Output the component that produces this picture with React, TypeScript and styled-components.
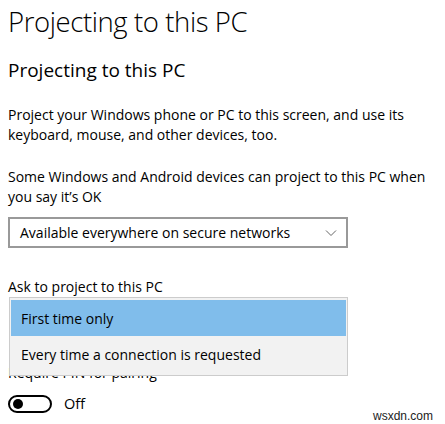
import React from "react";
import styled, { createGlobalStyle } from "styled-components";

const Global = createGlobalStyle`
  html, body { margin: 0; padding: 0; background: #fff; }
  body { font-family: "Open Sans", "Noto Sans", sans-serif; color: #000; }
`;

const Page = styled.div`
  position: relative;
  width: 445px;
  height: 424px;
  overflow: hidden;
  padding-left: 8px;
  box-sizing: border-box;
  display: flex;
  flex-direction: column;
`;

const Title = styled.h1`
  margin: 0;
  font-weight: 300;
  font-size: 27.5px;
  line-height: 43px;
  letter-spacing: -0.4px;
`;

const Subtitle = styled.h2`
  margin: 14px 0 0;
  font-weight: 400;
  font-size: 19px;
  line-height: 27px;
`;

const Para = styled.p<{ $top: number }>`
  margin: ${(p) => p.$top}px 0 0;
  font-size: 14px;
  line-height: 20px;
  width: 440px;
`;

const Combo = styled.div`
  margin-top: 10px;
  width: 340px;
  height: 31px;
  box-sizing: border-box;
  border: 2px solid #999;
  display: flex;
  align-items: center;
  justify-content: space-between;
  padding: 0 9px 0 10px;
  font-size: 14px;
`;

const Chevron = styled.svg`
  width: 12px;
  height: 8px;
`;

const Section = styled.div`
  position: relative;
  margin-top: 29px;
  display: flex;
  flex-direction: column;
`;

const Label = styled.div<{ $top?: number }>`
  margin-top: ${(p) => p.$top ?? 0}px;
  font-size: 14px;
  line-height: 20px;
`;

const Popup = styled.div`
  position: absolute;
  left: 1px;
  top: 20px;
  width: 339px;
  height: 79px;
  box-sizing: border-box;
  background: #f2f2f2;
  border: 1px solid #cccccc;
  padding: 2px 1px;
  display: flex;
  flex-direction: column;
`;

const Item = styled.div<{ $selected?: boolean }>`
  height: 36px;
  display: flex;
  align-items: center;
  padding-left: 10px;
  font-size: 14px;
  background: ${(p) => (p.$selected ? "#80bdeb" : "transparent")};
`;

const ToggleRow = styled.div`
  display: flex;
  align-items: center;
  gap: 12px;
  margin-top: 11px;
  font-size: 14.5px;
`;

const Toggle = styled.div`
  width: 44px;
  height: 18px;
  box-sizing: border-box;
  border: 2px solid #000;
  border-radius: 9px;
  display: flex;
  align-items: center;
  padding-left: 3px;
`;

const Knob = styled.div`
  width: 10px;
  height: 10px;
  border-radius: 50%;
  background: #000;
`;

const Watermark = styled.div`
  position: absolute;
  right: 12px;
  bottom: 1px;
  font-family: "Liberation Sans", Arial, sans-serif;
  font-size: 12px;
  color: #222;
`;

export default function App() {
  return (
    <>
      <Global />
      <Page>
        <Title>Projecting to this PC</Title>
        <Subtitle>Projecting to this PC</Subtitle>
        <Para $top={21}>
          Project your Windows phone or PC to this screen, and use its keyboard, mouse, and other devices, too.
        </Para>
        <Para $top={22}>
          Some Windows and Android devices can project to this PC when you say it’s OK
        </Para>
        <Combo>
          <span>Available everywhere on secure networks</span>
          <Chevron viewBox="0 0 12 8">
            <path d="M1 1.5 L6 6.5 L11 1.5" fill="none" stroke="#666" strokeWidth="1" />
          </Chevron>
        </Combo>
        <Section>
          <Label>Ask to project to this PC</Label>
          <Label $top={66}>Require PIN for pairing</Label>
          <ToggleRow>
            <Toggle>
              <Knob />
            </Toggle>
            <span>Off</span>
          </ToggleRow>
          <Popup>
            <Item $selected>First time only</Item>
            <Item>Every time a connection is requested</Item>
          </Popup>
        </Section>
        <Watermark>wsxdn.com</Watermark>
      </Page>
    </>
  );
}
